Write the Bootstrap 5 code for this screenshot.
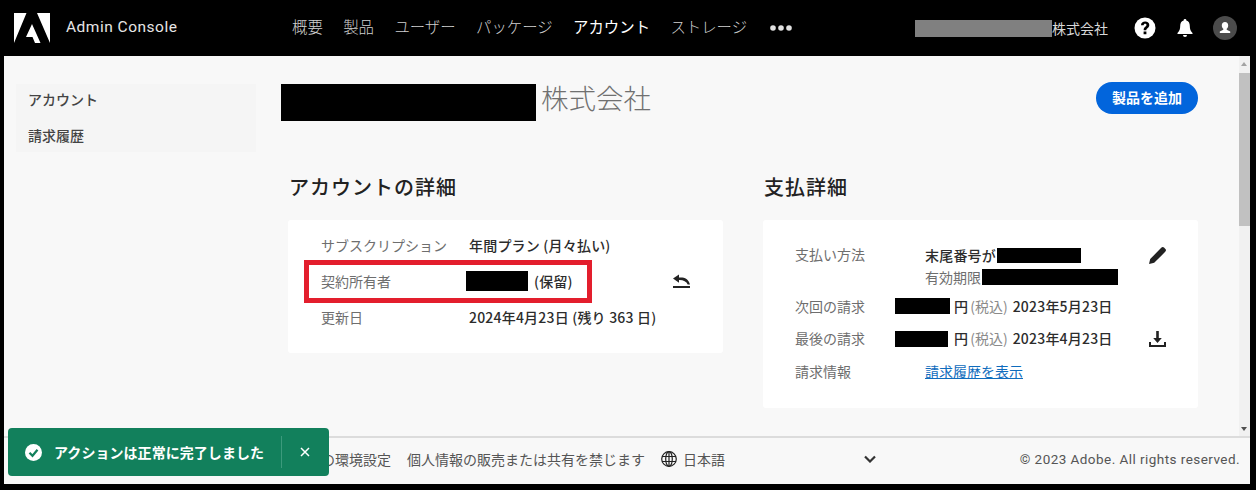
<!doctype html>
<html lang="ja"><head><meta charset="utf-8">
<link href="https://cdn.jsdelivr.net/npm/bootstrap@5.3.0/dist/css/bootstrap.min.css" rel="stylesheet">
<style>
html,body{height:100%;overflow:hidden}
body{background:#000;font-family:"Noto Sans CJK JP","Noto Sans",sans-serif;color:#2c2c2c;font-size:14px;width:1256px;height:490px}
.topbar{height:56px;background:#000;color:#fff;padding:0 19px 0 14px}
.brand-name{font-family:Roboto,sans-serif;font-size:15.500px;letter-spacing:.5px;margin-left:16px;width:226px;color:#e6e6e6}
.top-menu{gap:20.400px;font-size:15.400px;color:#d0d0d0;font-weight:300;padding-bottom:2px}
.top-menu .on{color:#fff;font-weight:400}
.dots{margin:3px 0 0 3px}
.org{font-size:14px;color:#d8d8d8;margin-left:auto;margin-right:26px}
.maskgrey{display:inline-block;width:137px;height:17px;background:#808080}
.tool-bell{margin-left:21px}
.tool-user{margin-left:20px}
.shell{height:428px;margin-left:4px;width:1246px;background:#f8f8f8}
.scroller{height:380px;position:relative}
.sidenav{width:240px;margin:28px 0 0 12px;height:68px;background:#f5f5f5;padding:0 12px;font-weight:500;font-size:14px;color:#444}
.sidenav div{height:36px;line-height:30px}
.mainpane{padding:0 40px 0 25px;width:982px}
.titlerow{height:70px;padding-top:28px}
.maskb{display:inline-block;background:#000;flex:none}
.m-title{width:255px;height:37px}
.m-owner{width:62px;height:20px;margin-left:-3px}
.m-card{width:84px;height:15px;margin-left:1px}
.m-exp{width:136px;height:16px;margin-left:1px}
.m-next{width:55px;height:16px}
.m-last{width:53px;height:16px;margin-right:2px}
.org-title{font-size:27.500px;font-weight:300;color:#707070;line-height:26px;margin-left:5px}
.add-btn{background:#0265dc;color:#fff;border-radius:16px;height:32px;width:102px;font-size:14px;font-weight:700;padding:0 0 2px;border:0;margin-top:-2px}
.panes{margin-top:46px;gap:40px;padding-left:7px}
.paneh{font-size:20px;font-weight:500;color:#222;margin:0 0 18px 1px;line-height:30px;letter-spacing:1px}
.plate{background:#fff;border-radius:3px}
.plate-a{width:435px;height:133px;padding:7px 33px;position:relative}
.plate-b{width:435px;height:188px;padding:24px 32px 0 32px}
.lbl{color:#6e6e6e}
.val{font-weight:500;color:#2c2c2c;letter-spacing:.2px}
.rowa{height:36px;align-items:center}
.rowa .lbl{width:148px}
.owner-state{margin-left:6px}
.flagged{position:absolute;left:16px;top:40px;width:288px;height:43px;border:5px solid #e31e2d}
.undo{margin-right:0}
.payhead{height:46px}
.payhead>.lbl{width:130px}
.payline{height:22px}
.edit-ic{margin-top:3px}
.rowb{display:flex;align-items:center;height:32.500px}
.rowb .lbl{width:100px}
.rowb .wide{width:130px}
.gr{color:#8a8a8a;margin:0 5px 0 2px}
.paylink{color:#0f6cbd;text-decoration:underline}
.sbar{position:absolute;right:0;top:0;width:11px;height:380px;background:#f1f1f1}
.sbar i{display:block;position:absolute;left:0;top:17px;width:11px;height:153px;background:#c1c1c1}
.sbar b{position:absolute;left:2px;border:3.500px solid transparent}
.sbar .u{top:3px;border-bottom:4px solid #a3a3a3}
.sbar .d{bottom:2px;border-top:4px solid #505050}
.foot{height:48px;border-top:2px solid #dcdcdc;background:#f8f8f8;padding:0 10px 4px 317px;font-size:14px;color:#555}
.foot span{white-space:nowrap}
.lang-name{margin-left:6px}
.chev{margin-left:139px}
.copy{font-family:Roboto,sans-serif;font-size:13.500px;margin-left:auto;letter-spacing:.45px}
.toast-ok{position:absolute;left:8px;top:428px;width:321px;height:48px;background:#12805c;color:#fff;border-radius:4px;font-weight:700;font-size:14px;padding-left:17px}
.toast-ok .msg{margin-left:12px;letter-spacing:.05px}
.toast-ok .sep{width:1px;height:32px;background:#3c9a7c;margin:0 18px 0 17px}
</style></head><body>
<div class="topbar d-flex align-items-center">
<svg width="36" height="30" viewBox="0 0 36 30"><path fill="#fff" d="M0 30V0h12.500zM36 30V0H23zM18 11l8.500 19h-5.500l-2.500-6h-6.500z"/></svg>
<span class="brand-name">Admin Console</span>
<div class="top-menu d-flex align-items-center"><span>概要</span><span>製品</span><span>ユーザー</span><span>パッケージ</span><span class="on">アカウント</span><span>ストレージ</span><svg class="dots" width="22" height="6" viewBox="0 0 22 6"><circle cx="3" cy="3" r="2.800" fill="#e0e0e0"/><circle cx="11" cy="3" r="2.800" fill="#e0e0e0"/><circle cx="19" cy="3" r="2.800" fill="#e0e0e0"/></svg></div>
<div class="org d-flex align-items-center"><span class="maskgrey"></span>株式会社</div>
<svg width="22" height="22" viewBox="0 0 22 22"><circle cx="11" cy="11" r="10.500" fill="#fff"/><path fill="#000" d="M7 8.200C7 5.800 8.800 4.500 11.200 4.500S15.300 5.900 15.300 8c0 3-3 3-3 5.200H9.700c-.2-3.300 2.800-3.500 2.800-5.100 0-.8-.6-1.300-1.400-1.300s-1.500.6-1.500 1.500zM9.600 14.500h2.800v2.800H9.600z"/></svg>
<svg class="tool-bell" width="16" height="18" viewBox="0 0 16 18"><path fill="#fff" d="M8 0a1.300 1.300 0 0 1 1.300 1.500C12 2.300 12.800 4.500 12.800 7c0 3 .8 5 2.700 7v1H.5v-1c1.900-2 2.700-4 2.700-7 0-2.500.8-4.700 3.500-5.500A1.300 1.300 0 0 1 8 0zM6 16h4a2 2 0 0 1-4 0z"/></svg>
<svg class="tool-user" width="24" height="24" viewBox="0 0 24 24"><circle cx="12" cy="12" r="12" fill="#4b4b4b"/><path fill="#fff" d="M12 6c2 0 3.200 1.400 3.200 3.400 0 1.500-.7 2.800-1.500 3.400v1l3.500 1.700V17H6.800v-1.500l3.500-1.700v-1c-.8-.6-1.500-1.900-1.500-3.400C8.800 7.400 10 6 12 6z"/></svg>
</div>
<div class="shell">
<div class="scroller d-flex">
<div class="sidenav flex-shrink-0"><div>アカウント</div><div>請求履歴</div></div>
<div class="mainpane">
<div class="titlerow d-flex justify-content-between align-items-start">
<div class="d-flex align-items-start"><span class="maskb m-title"></span><span class="org-title">株式会社</span></div>
<button class="add-btn btn">製品を追加</button>
</div>
<div class="panes d-flex">
<section><h2 class="paneh">アカウントの詳細</h2>
<div class="plate plate-a">
<div class="d-flex rowa"><span class="lbl">サブスクリプション</span><span class="val">年間プラン (月々払い)</span></div>
<div class="d-flex rowa"><span class="lbl">契約所有者</span><span class="maskb m-owner"></span><span class="owner-state val">(保留)</span>
<svg class="ms-auto undo" width="17" height="14" viewBox="0 0 17 14"><path fill="#222" d="M0 12h17v2H0zM0 4.500L6 .5v3c5-.5 9.500 1 11 7h-2.300C13.500 7.500 10 5.800 6 6v2.800z"/></svg></div>
<div class="d-flex rowa"><span class="lbl">更新日</span><span class="val">2024年4月23日 (残り 363 日)</span></div>
<div class="flagged"></div>
</div></section>
<section><h2 class="paneh">支払詳細</h2>
<div class="plate plate-b">
<div class="d-flex payhead"><span class="lbl">支払い方法</span>
<div class="flex-grow-1"><div class="val d-flex align-items-center payline">末尾番号が<span class="maskb m-card"></span></div><div class="d-flex align-items-center lbl payline">有効期限<span class="maskb m-exp"></span></div></div>
<svg class="edit-ic" width="17" height="17" viewBox="0 0 17 17"><path fill="#222" d="M0 17l1.200-5L11.500 1.600l4 4L5.200 15.800zM12.500.6a1.800 1.800 0 0 1 2.500 0l1.400 1.400a1.800 1.800 0 0 1 0 2.500l-.9.900-4-4z"/></svg></div>
<div class="rowb"><span class="lbl">次回の請求</span><span class="maskb m-next"></span><span class="val ms-1">円</span><span class="gr">(税込)</span><span class="val">2023年5月23日</span></div>
<div class="rowb"><span class="lbl">最後の請求</span><span class="maskb m-last"></span><span class="val ms-1">円</span><span class="gr">(税込)</span><span class="val">2023年4月23日</span>
<svg class="ms-auto" width="17" height="16" viewBox="0 0 17 16"><path fill="#222" d="M0 11h2v3h13v-3h2v5H0zM7.200 0h2.600v7h3l-4.300 5-4.300-5h3z"/></svg></div>
<div class="rowb"><span class="lbl wide">請求情報</span><a class="paylink" href="#">請求履歴を表示</a></div>
</div></section>
</div>
</div>
<div class="sbar"><b class="u"></b><i></i><b class="d"></b></div>
</div>
<div class="foot d-flex align-items-center"><span>の環境設定</span><span class="ms-3">個人情報の販売または共有を禁じます</span>
<span class="ms-3 d-flex align-items-center"><svg width="16" height="16" viewBox="0 0 16 16" fill="none" stroke="#222" stroke-width="1.200"><circle cx="8" cy="8" r="7.300"/><ellipse cx="8" cy="8" rx="3.300" ry="7.300"/><path d="M1 5.500h14M1 10.500h14M8 1v14"/></svg><span class="lang-name">日本語</span></span>
<svg class="chev" width="12" height="8" viewBox="0 0 12 8"><path d="M1 1.500l5 5 5-5" fill="none" stroke="#333" stroke-width="2.200"/></svg>
<span class="copy">© 2023 Adobe. All rights reserved.</span></div>
</div>
<div class="toast-ok d-flex align-items-center"><svg width="17" height="17" viewBox="0 0 17 17"><circle cx="8.500" cy="8.500" r="8.500" fill="#fff"/><path d="M4.500 8.800l3 3 5-6" fill="none" stroke="#12805c" stroke-width="2.200"/></svg><span class="msg">アクションは正常に完了しました</span><span class="sep"></span><svg width="10" height="10" viewBox="0 0 10 10"><path d="M1 1l8 8M9 1l-8 8" stroke="#fff" stroke-width="1.500"/></svg></div>
<script src="https://cdn.jsdelivr.net/npm/bootstrap@5.3.0/dist/js/bootstrap.bundle.min.js"></script>
</body></html>
